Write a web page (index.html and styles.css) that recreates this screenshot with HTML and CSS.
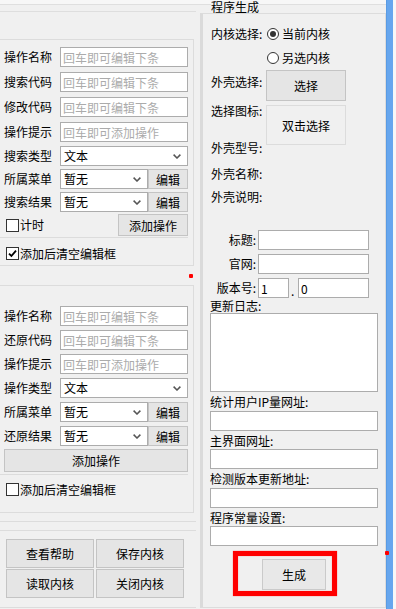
FILE: index.html
```html
<!DOCTYPE html>
<html lang="zh-CN">
<head>
    <meta charset="UTF-8">
    <meta name="viewport" content="width=device-width, initial-scale=1.0">
    <title>内核编辑 - 程序生成</title>
    <link rel="stylesheet" href="styles.css">
</head>
<body>

    <div class="window">

        <!-- 左侧：操作编辑 -->
        <div class="left">
            <div class="left-head"></div>

            <div class="group group-search">
                <div class="fields">
                    <div class="row"><span class="lbl">操作名称</span><input class="field" placeholder="回车即可编辑下条"></div>
                    <div class="row"><span class="lbl">搜索代码</span><input class="field" placeholder="回车即可编辑下条"></div>
                    <div class="row"><span class="lbl">修改代码</span><input class="field" placeholder="回车即可编辑下条"></div>
                    <div class="row"><span class="lbl">操作提示</span><input class="field" placeholder="回车即可添加操作"></div>
                </div>
                <div class="fields fields-select">
                    <div class="row">
                        <span class="lbl">搜索类型</span>
                        <div class="select">文本<svg width="8" height="5" viewBox="0 0 8 5"><path d="M0.6 0.6 L4 4 L7.4 0.6" fill="none" stroke="#555" stroke-width="1.5"/></svg></div>
                    </div>
                    <div class="row">
                        <span class="lbl">所属菜单</span>
                        <div class="select select-short">暂无<svg width="8" height="5" viewBox="0 0 8 5"><path d="M0.6 0.6 L4 4 L7.4 0.6" fill="none" stroke="#555" stroke-width="1.5"/></svg></div>
                        <button class="btn btn-edit">编辑</button>
                    </div>
                    <div class="row">
                        <span class="lbl">搜索结果</span>
                        <div class="select select-short">暂无<svg width="8" height="5" viewBox="0 0 8 5"><path d="M0.6 0.6 L4 4 L7.4 0.6" fill="none" stroke="#555" stroke-width="1.5"/></svg></div>
                        <button class="btn btn-edit">编辑</button>
                    </div>
                </div>
                <div class="row row-action">
                    <label class="check"><span class="box"></span>计时</label>
                    <button class="btn btn-add">添加操作</button>
                </div>
                <div class="sep"></div>
                <label class="check check-clear">
                    <span class="box"><svg width="9" height="9" viewBox="0 0 9 9"><path d="M1 4.6 L3.4 7 L8 1.6" fill="none" stroke="#000" stroke-width="1.8"/></svg></span>添加后清空编辑框
                </label>
            </div>

            <span class="marker marker-left"></span>

            <div class="group group-restore">
                <div class="fields">
                    <div class="row"><span class="lbl">操作名称</span><input class="field" placeholder="回车即可编辑下条"></div>
                    <div class="row"><span class="lbl">还原代码</span><input class="field" placeholder="回车即可编辑下条"></div>
                    <div class="row"><span class="lbl">操作提示</span><input class="field" placeholder="回车即可添加操作"></div>
                    <div class="row">
                        <span class="lbl">操作类型</span>
                        <div class="select">文本<svg width="8" height="5" viewBox="0 0 8 5"><path d="M0.6 0.6 L4 4 L7.4 0.6" fill="none" stroke="#555" stroke-width="1.5"/></svg></div>
                    </div>
                    <div class="row">
                        <span class="lbl">所属菜单</span>
                        <div class="select select-short">暂无<svg width="8" height="5" viewBox="0 0 8 5"><path d="M0.6 0.6 L4 4 L7.4 0.6" fill="none" stroke="#555" stroke-width="1.5"/></svg></div>
                        <button class="btn btn-edit">编辑</button>
                    </div>
                    <div class="row">
                        <span class="lbl">还原结果</span>
                        <div class="select select-short">暂无<svg width="8" height="5" viewBox="0 0 8 5"><path d="M0.6 0.6 L4 4 L7.4 0.6" fill="none" stroke="#555" stroke-width="1.5"/></svg></div>
                        <button class="btn btn-edit">编辑</button>
                    </div>
                </div>
                <button class="btn btn-wide">添加操作</button>
                <div class="sep"></div>
                <label class="check check-clear"><span class="box"></span>添加后清空编辑框</label>
            </div>

            <div class="left-rule"></div>

            <div class="core-panel">
                <button class="btn btn-core">查看帮助</button>
                <button class="btn btn-core">保存内核</button>
                <button class="btn btn-core">读取内核</button>
                <button class="btn btn-core">关闭内核</button>
            </div>
        </div>

        <!-- 右侧：程序生成 -->
        <div class="right">
            <div class="right-title"><span class="title-text">程序生成</span></div>

            <div class="gen-group">
                <div class="kernel-row kernel-first">
                    <span class="side-lbl">内核选择:</span>
                    <label class="radio"><span class="dot dot-on"></span>当前内核</label>
                </div>
                <div class="kernel-row">
                    <span class="side-lbl"></span>
                    <label class="radio"><span class="dot"></span>另选内核</label>
                </div>

                <div class="shell-block">
                    <div class="shell-labels">
                        <span>外壳选择:</span>
                        <span>选择图标:</span>
                        <span>外壳型号:</span>
                        <span>外壳名称:</span>
                        <span>外壳说明:</span>
                    </div>
                    <div class="shell-controls">
                        <button class="btn btn-pick">选择</button>
                        <button class="btn btn-icon">双击选择</button>
                    </div>
                </div>

                <div class="info-rows">
                    <div class="info-row"><span class="info-lbl">标题:</span><input class="field info-field"></div>
                    <div class="info-row"><span class="info-lbl">官网:</span><input class="field info-field"></div>
                    <div class="info-row">
                        <span class="info-lbl">版本号:</span>
                        <input class="field ver-major" value="1">
                        <span class="ver-dot">.</span>
                        <input class="field ver-minor" value="0">
                    </div>
                </div>

                <span class="stack-lbl">更新日志:</span>
                <textarea class="field log-box"></textarea>

                <span class="stack-lbl stack-next">统计用户IP量网址:</span>
                <input class="field stack-field">
                <span class="stack-lbl stack-next">主界面网址:</span>
                <input class="field stack-field">
                <span class="stack-lbl stack-next">检测版本更新地址:</span>
                <input class="field stack-field">
                <span class="stack-lbl stack-next">程序常量设置:</span>
                <input class="field stack-field">

                <div class="highlight">
                    <button class="btn btn-generate">生成</button>
                </div>
            </div>

            <span class="marker marker-right"></span>
        </div>

        <div class="scroll-bar"></div>
        <div class="edge"></div>
    </div>

</body>
</html>
```

FILE: styles.css
```css
* {
    box-sizing: border-box;
}

body {
    margin: 0;
    width: 396px;
    height: 609px;
    overflow: hidden;
    background-color: #f0f0f0;
    font-family: "Noto Sans CJK SC", "Liberation Sans", sans-serif;
    font-size: 12px;
    color: #000;
}

.window {
    display: flex;
    height: 609px;
    background: linear-gradient(#f7f7f7 0 4px, #dfdfdf 4px 5px, #f0f0f0 5px);
}

/* ===== 左侧 ===== */

.left {
    position: relative;
    flex: none;
    width: 196px;
}

.left-head {
    height: 12px;
    border-bottom: 1px solid #dedede;
}

.group {
    width: 194px;
    border: 1px solid #dcdcdc;
    border-left: none;
    padding: 7px 5px 5px 4px;
}

.group-search {
    margin-top: 27px;
}

.group-restore {
    margin-top: 19px;
    padding-top: 20px;
    padding-bottom: 16px;
}

.fields {
    display: flex;
    flex-direction: column;
    gap: 5px;
}

.fields-select {
    margin-top: 4px;
    gap: 3px;
}

.group-restore .fields {
    gap: 4px;
}

.row {
    display: flex;
    align-items: center;
    height: 20px;
}

.lbl {
    flex: none;
    width: 56px;
    line-height: 14px;
}

.field {
    height: 20px;
    margin: 0;
    padding: 0 2px;
    font: inherit;
    color: #000;
    background-color: #fff;
    border: 1px solid #acacac;
    border-radius: 0;
    outline: none;
}

.row .field {
    width: 128px;
}

.field::placeholder {
    color: #ababab;
}

.select {
    display: flex;
    align-items: center;
    justify-content: space-between;
    width: 128px;
    height: 20px;
    padding: 0 6px 0 3px;
    line-height: 14px;
    background-color: #fff;
    border: 1px solid #acacac;
}

.select-short {
    width: 88px;
}

.btn {
    margin: 0;
    padding: 0;
    font: inherit;
    color: #000;
    background-color: #e5e5e5;
    border: 1px solid #c4c4c4;
    border-radius: 0;
}

.btn-edit {
    width: 40px;
    height: 20px;
}

.row-action {
    justify-content: space-between;
    height: 22px;
    margin-top: 2px;
}

.btn-add {
    width: 70px;
    height: 22px;
}

.btn-wide {
    display: block;
    width: 184px;
    height: 23px;
    margin-top: 3px;
}

.sep {
    width: 188px;
    height: 1px;
    margin: 1px 0 0 -4px;
    background-color: #dcdcdc;
}

.group-restore .sep {
    margin-top: 2px;
}

.check {
    display: flex;
    align-items: center;
    gap: 1px;
    margin-left: 2px;
    line-height: 14px;
}

.box {
    display: flex;
    align-items: center;
    justify-content: center;
    width: 13px;
    height: 13px;
    background-color: #fff;
    border: 1px solid #333;
}

.check-clear {
    height: 13px;
    margin-top: 9px;
}

.group-restore .check-clear {
    margin-top: 8px;
}

.left-rule {
    height: 1px;
    margin-top: 8px;
    background-color: #dcdcdc;
}

.core-panel {
    display: grid;
    grid-template-columns: 88px 88px;
    grid-auto-rows: 29px;
    column-gap: 2px;
    row-gap: 1px;
    margin-top: 8px;
    padding: 8px 0 9px 6px;
    border-top: 1px solid #dcdcdc;
    border-bottom: 1px solid #dcdcdc;
}

.marker {
    position: absolute;
    width: 4px;
    height: 4px;
    background-color: #f00;
    border-radius: 1px;
}

.marker-left {
    left: 189px;
    top: 274px;
}

/* ===== 右侧 ===== */

.right {
    position: relative;
    display: flex;
    flex-direction: column;
    flex: none;
    width: 190px;
    padding-left: 4px;
}

.right-title {
    height: 13px;
    padding: 1px 0 0 11px;
    line-height: 12px;
    white-space: nowrap;
}

.title-text {
    display: inline-block;
    background-color: #f0f0f0;
}

.gen-group {
    flex: 1;
    margin-bottom: 1px;
    border: 1px solid #dcdcdc;
    border-left: 3px solid #dadada;
}

.kernel-row {
    display: flex;
    align-items: center;
    height: 24px;
}

.kernel-first {
    margin-top: 8px;
}

.side-lbl {
    flex: none;
    width: 63px;
    padding-left: 8px;
    line-height: 14px;
}

.radio {
    display: flex;
    align-items: center;
    gap: 3px;
    margin-left: 1px;
    line-height: 14px;
}

.dot {
    display: flex;
    align-items: center;
    justify-content: center;
    width: 12px;
    height: 12px;
    background-color: #fff;
    border: 1px solid #333;
    border-radius: 50%;
}

.dot-on::after {
    content: '';
    width: 6px;
    height: 6px;
    border-radius: 50%;
    background-color: #333;
}

.shell-block {
    display: flex;
}

.shell-labels {
    display: flex;
    flex-direction: column;
    flex: none;
    width: 63px;
    padding-left: 8px;
}

.shell-labels span {
    line-height: 14px;
}

.shell-labels span:nth-child(1) { margin-top: 5px; }
.shell-labels span:nth-child(2) { margin-top: 15px; }
.shell-labels span:nth-child(3) { margin-top: 23px; }
.shell-labels span:nth-child(4) { margin-top: 12px; }
.shell-labels span:nth-child(5) { margin-top: 9px; }

.shell-controls {
    display: flex;
    flex-direction: column;
    gap: 4px;
}

.btn-pick {
    width: 80px;
    height: 31px;
}

.btn-icon {
    width: 80px;
    height: 40px;
    background-color: #f0f0f0;
    border-color: #dcdcdc;
}

.info-rows {
    display: flex;
    flex-direction: column;
    gap: 4px;
    margin-top: 26px;
}

.info-row {
    display: flex;
    align-items: center;
    height: 20px;
}

.info-lbl {
    flex: none;
    width: 53px;
    margin-right: 2px;
    text-align: right;
    line-height: 14px;
}

.info-field {
    width: 111px;
}

.ver-major {
    width: 31px;
}

.ver-dot {
    align-self: flex-end;
    width: 9px;
    padding-left: 2px;
    line-height: 14px;
}

.ver-minor {
    width: 71px;
}

.stack-lbl {
    display: block;
    margin: 1px 0 0 7px;
    line-height: 14px;
}

.stack-next {
    margin-top: 3px;
}

.log-box {
    display: block;
    width: 168px;
    height: 79px;
    margin-left: 7px;
    resize: none;
}

.stack-field {
    display: block;
    width: 168px;
    margin: 1.6px 0 0 7px;
}

.highlight {
    width: 104px;
    height: 45px;
    margin: 4.6px 0 0 30px;
    padding: 3px 0 0 24px;
    border: 5px solid #f00;
    box-shadow: 0 0 1px rgba(255, 0, 0, 0.6), inset 0 0 1px rgba(255, 0, 0, 0.6);
}

.btn-generate {
    display: block;
    width: 64px;
    height: 31px;
    background-color: #e8e8e8;
    border-color: #cacaca;
}

.marker-right {
    left: 189px;
    top: 551px;
}

.scroll-bar {
    flex: none;
    width: 7px;
    background-color: #66a6ee;
    border-left: 1px solid #5a9be3;
}

.edge {
    flex: none;
    width: 3px;
    background-color: #f7f7f7;
}
```
